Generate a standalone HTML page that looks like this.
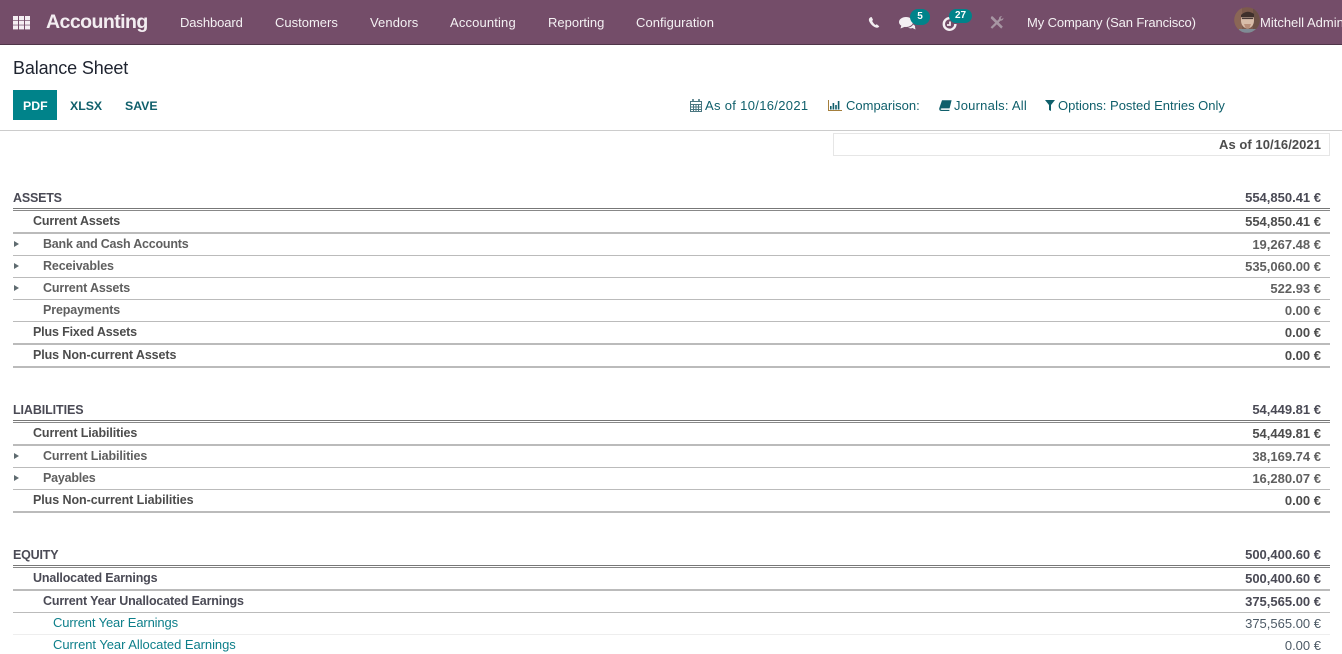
<!DOCTYPE html>
<html><head><meta charset="utf-8"><style>
html,body{margin:0;padding:0;width:1342px;height:647px;overflow:hidden;background:#fff;font-family:"Liberation Sans",sans-serif;}
.t{position:absolute;white-space:nowrap;line-height:16px;font-size:13px}
.n{color:#fff;top:15px;font-size:13px;opacity:.92}
.b{font-weight:bold;color:#4c4c4c}
.h{font-weight:bold;color:#4a4a55}
.g{font-weight:bold;color:#5f5f5f}
.w{font-size:12.5px;letter-spacing:-.15px}
.r{right:21px;text-align:right}
.l{position:absolute;left:13px;width:1317px;background:#bbb}
.f{color:#0f5f6b;top:98px;font-size:13px}
.a{position:absolute;width:0;height:0;left:14px;border-left:5px solid #5f6b70;border-top:3.5px solid transparent;border-bottom:3.5px solid transparent}
svg{position:absolute}
.bd{position:absolute;background:#00838a;color:#fff;font-size:10px;font-weight:bold;text-align:center}
.s{font-size:12.5px;letter-spacing:-.1px}
.u{font-size:12.3px}
</style></head><body>
<div style="position:absolute;left:0;top:0;width:1342px;height:44px;background:#744d69;border-bottom:1px solid #4f3548"></div>
<svg style="left:13px;top:16px" width="18" height="14" fill="#f4eef2"><rect x="0" y="0" width="5" height="4"/><rect x="6" y="0" width="5" height="4"/><rect x="12" y="0" width="5" height="4"/><rect x="0" y="4.7" width="5" height="4"/><rect x="6" y="4.7" width="5" height="4"/><rect x="12" y="4.7" width="5" height="4"/><rect x="0" y="9.4" width="5" height="4"/><rect x="6" y="9.4" width="5" height="4"/><rect x="12" y="9.4" width="5" height="4"/></svg>
<div class="t" style="left:46px;top:10px;color:#f3edf1;font-size:19.5px;line-height:24px;font-weight:bold;letter-spacing:-.55px">Accounting</div>
<div class="t n" style="left:180px;letter-spacing:-.1px">Dashboard</div>
<div class="t n" style="left:275px">Customers</div>
<div class="t n" style="left:370px;letter-spacing:.1px">Vendors</div>
<div class="t n" style="left:450px;letter-spacing:.15px">Accounting</div>
<div class="t n" style="left:548px">Reporting</div>
<div class="t n" style="left:636px;letter-spacing:.05px">Configuration</div>
<svg style="left:868px;top:17px" width="12" height="11"><path d="M2.5 0.3 C0.5 1.5 0.3 3.5 2.2 6 C4 8.6 6.5 10.6 9 10.7 C10 10.7 10.8 10.2 11.3 9.4 L8.8 7.2 L7.5 8 C6.2 7.3 4.8 5.5 4.2 4 L5 2.8 L3.6 0 Z" fill="#f2eef1"/></svg>
<svg style="left:899px;top:17px" width="17" height="13" fill="#f4eff3"><ellipse cx="7" cy="5" rx="7" ry="5"/><path d="M2.5 8 L1.5 11.5 L6.5 9.5 Z"/><path d="M9 10.5 C11 10.5 13 9.5 14 7.5 C15.5 8.2 16.5 9 16 10 L16.5 12.5 L13.5 11 C12 11.6 10.5 11.4 9 10.5Z"/></svg>
<div class="bd" style="left:910px;top:9px;width:20px;height:16px;line-height:15px;border-radius:10px">5</div>
<svg style="left:942px;top:16px" width="16" height="15" fill="none" stroke="#f4eff3" stroke-width="2.4"><path d="M7.5 2.2 A5.8 5.8 0 1 0 13.4 8"/><path d="M8 5.5 V9 H5" stroke-width="1.8"/></svg>
<div class="bd" style="left:949px;top:9px;width:23px;height:14px;line-height:14px;border-radius:8px">27</div>
<svg style="left:990px;top:16px" width="14" height="13" fill="#a796a3"><path d="M2.2 12.8 L0.6 11.2 L9 3 C8.8 1.5 10 0 12 0.2 L10.5 2 L11.6 3.2 L13.4 1.8 C13.6 3.8 12 5 10.6 4.6 Z"/><path d="M1 0.6 L2.6 0.2 L12.8 10.6 L11.2 12.6 L0.8 2.4 Z"/></svg>
<div class="t n" style="left:1027px;letter-spacing:-.12px">My Company (San Francisco)</div>
<svg style="left:1234px;top:7px" width="26" height="26"><defs><clipPath id="c"><circle cx="13" cy="13" r="12.8"/></clipPath></defs><g clip-path="url(#c)"><rect width="26" height="26" fill="#7c5a4c"/><rect x="0" y="0" width="8" height="26" fill="#8a6656"/><rect x="19" y="0" width="7" height="26" fill="#6b5046"/><ellipse cx="13.5" cy="13.5" rx="6.5" ry="8" fill="#d8bda9"/><path d="M7 8 Q13 2 20 7 L20 10 L7 10Z" fill="#3f302c"/><rect x="8" y="10.5" width="11" height="1.6" fill="#4a3a38"/><path d="M10 17 H17 L15.5 21 H11.5Z" fill="#b88f7a"/><rect x="5" y="22" width="17" height="4" fill="#7f8b96"/></g></svg>
<div class="t n" style="left:1260px">Mitchell Admin</div>

<div class="t" style="left:13px;top:57px;font-size:18px;line-height:22px;color:#1f2430;letter-spacing:-.15px">Balance Sheet</div>
<div style="position:absolute;left:13px;top:90px;width:44px;height:30px;background:#00838a"></div>
<div class="t u" style="left:23px;top:98px;color:#fff;font-weight:bold">PDF</div>
<div class="t u" style="left:70px;top:98px;color:#0f5f6b;font-weight:bold">XLSX</div>
<div class="t u" style="left:125px;top:98px;color:#0f5f6b;font-weight:bold">SAVE</div>

<svg style="left:690px;top:99px" width="13" height="13" fill="none" stroke="#4a7680"><rect x=".5" y="2.5" width="11" height="10"/><path d="M.5 5.5H11.5M.5 8H11.5M.5 10.5H11.5M3.5 5.5V12.5M6 5.5V12.5M8.5 5.5V12.5"/><path d="M3 0V3M9 0V3" stroke-width="1.6"/></svg>
<div class="t f" style="left:705px;letter-spacing:.32px">As of 10/16/2021</div>
<svg style="left:828px;top:100px" width="14" height="11" fill="#0f5f6b"><rect x="2" y="6" width="1.6" height="3.5"/><rect x="4.6" y="3" width="1.6" height="6.5"/><rect x="7.2" y="5" width="1.6" height="4.5"/><rect x="9.8" y="1" width="1.6" height="8.5"/><path d="M0 0H1V10H14V11H0Z" fill="#a57f3c"/></svg>
<div class="t f" style="left:846px">Comparison:</div>
<svg style="left:939px;top:100px" width="13" height="11"><path d="M3 0.3H12.6L10.6 8.4H2.8 C1.2 8.4 1.2 9.9 2.8 9.9 H10.6 L10.2 11 H2.2 C0.2 11 -0.2 9 0.5 7.5 Z" fill="#0f5f6b"/></svg>
<div class="t f" style="left:954px;letter-spacing:.22px">Journals: All</div>
<svg style="left:1045px;top:100px" width="10" height="11"><path d="M0 0H10L6 5V11L4 10V5Z" fill="#0f5f6b"/></svg>
<div class="t f" style="left:1058px">Options: Posted Entries Only</div>
<div style="position:absolute;left:0;top:130px;width:1342px;height:1px;background:#ccc"></div>
<div style="position:absolute;left:833px;top:133px;width:495px;height:21px;border:1px solid #e6e6e6"></div>
<div class="t b" style="top:137px;right:21px;letter-spacing:.05px">As of 10/16/2021</div>

<div class="t h s" style="left:13px;top:190px;letter-spacing:-.2px">ASSETS</div><div class="t h r" style="top:190px">554,850.41 €</div>
<div class="l" style="top:208px;height:1px;background:#777"></div><div class="l" style="top:210px;height:1px;background:#888"></div>
<div class="t b w" style="left:33px;top:213px">Current Assets</div><div class="t b r" style="top:214px">554,850.41 €</div>
<div class="l" style="top:232px;height:2px"></div>
<div class="a" style="top:241px"></div><div class="t g w" style="left:43px;top:236px;letter-spacing:-.22px">Bank and Cash Accounts</div><div class="t g r" style="top:237px">19,267.48 €</div>
<div class="l" style="top:255px;height:1px"></div>
<div class="a" style="top:263px"></div><div class="t g w" style="left:43px;top:258px;letter-spacing:-.13px">Receivables</div><div class="t g r" style="top:259px">535,060.00 €</div>
<div class="l" style="top:277px;height:1px"></div>
<div class="a" style="top:285px"></div><div class="t g w" style="left:43px;top:280px">Current Assets</div><div class="t g r" style="top:281px">522.93 €</div>
<div class="l" style="top:299px;height:1px"></div>
<div class="t g w" style="left:43px;top:302px;letter-spacing:-.13px">Prepayments</div><div class="t g r" style="top:303px">0.00 €</div>
<div class="l" style="top:321px;height:1px"></div>
<div class="t b w" style="left:33px;top:324px">Plus Fixed Assets</div><div class="t b r" style="top:325px">0.00 €</div>
<div class="l" style="top:343px;height:2px"></div>
<div class="t b w" style="left:33px;top:347px;letter-spacing:-.09px">Plus Non-current Assets</div><div class="t b r" style="top:348px">0.00 €</div>
<div class="l" style="top:366px;height:2px"></div>

<div class="t h s" style="left:13px;top:402px">LIABILITIES</div><div class="t h r" style="top:402px">54,449.81 €</div>
<div class="l" style="top:420px;height:1px;background:#777"></div><div class="l" style="top:422px;height:1px;background:#888"></div>
<div class="t b w" style="left:33px;top:425px;letter-spacing:-.11px">Current Liabilities</div><div class="t b r" style="top:426px">54,449.81 €</div>
<div class="l" style="top:444px;height:2px"></div>
<div class="a" style="top:453px"></div><div class="t g w" style="left:43px;top:448px;letter-spacing:-.11px">Current Liabilities</div><div class="t g r" style="top:449px">38,169.74 €</div>
<div class="l" style="top:467px;height:1px"></div>
<div class="a" style="top:475px"></div><div class="t g w" style="left:43px;top:470px;letter-spacing:-.22px">Payables</div><div class="t g r" style="top:471px">16,280.07 €</div>
<div class="l" style="top:489px;height:1px"></div>
<div class="t b w" style="left:33px;top:492px;letter-spacing:-.07px">Plus Non-current Liabilities</div><div class="t b r" style="top:493px">0.00 €</div>
<div class="l" style="top:511px;height:2px"></div>

<div class="t h s" style="left:13px;top:547px;letter-spacing:-.2px">EQUITY</div><div class="t h r" style="top:547px">500,400.60 €</div>
<div class="l" style="top:565px;height:1px;background:#777"></div><div class="l" style="top:567px;height:1px;background:#888"></div>
<div class="t h w" style="left:33px;top:570px;letter-spacing:-.17px">Unallocated Earnings</div><div class="t h r" style="top:571px">500,400.60 €</div>
<div class="l" style="top:589px;height:2px"></div>
<div class="t h w" style="left:43px;top:593px;letter-spacing:-.16px">Current Year Unallocated Earnings</div><div class="t h r" style="top:594px">375,565.00 €</div>
<div class="l" style="top:612px;height:1px"></div>
<div class="t" style="left:53px;top:615px;color:#0d7f8a;letter-spacing:-.14px">Current Year Earnings</div><div class="t r" style="top:616px;color:#4d5a66">375,565.00 €</div>
<div class="l" style="top:634px;height:1px;background:#eee"></div>
<div class="t" style="left:53px;top:637px;color:#0d7f8a;letter-spacing:-.05px">Current Year Allocated Earnings</div><div class="t r" style="top:638px;color:#4d5a66">0.00 €</div>
</body></html>
